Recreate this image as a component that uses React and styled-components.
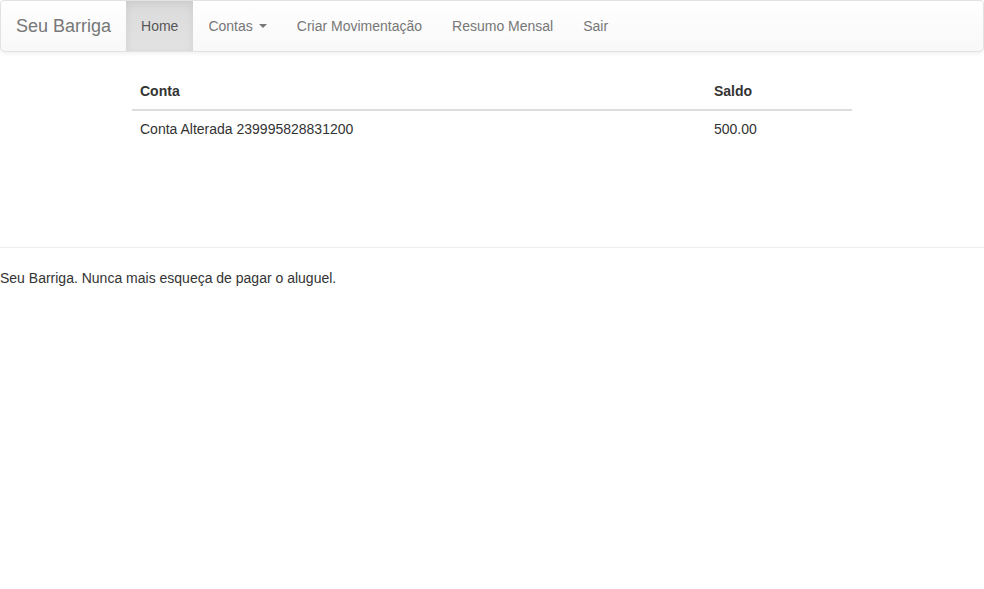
import React from "react";
import styled, { createGlobalStyle } from "styled-components";

const GlobalStyle = createGlobalStyle`
  * { box-sizing: border-box; }
  body {
    margin: 0;
    font-family: "Liberation Sans", Arial, Helvetica, sans-serif;
    font-size: 14px;
    line-height: 1.42857143;
    color: #333;
    background: #fff;
  }
`;

const Navbar = styled.nav`
  display: flex;
  align-items: stretch;
  height: 52px;
  border: 1px solid #e2e2e2;
  border-radius: 4px;
  background-image: linear-gradient(to bottom, #fff 0, #f8f8f8 100%);
  box-shadow: inset 0 1px 0 rgba(255,255,255,.15), 0 1px 5px rgba(0,0,0,.075);
  margin-bottom: 21px;
`;

const Brand = styled.a`
  padding: 15px;
  font-size: 18px;
  line-height: 20px;
  color: #777;
  text-decoration: none;
  text-shadow: 0 1px 0 rgba(255,255,255,.25);
`;

const NavList = styled.ul`
  display: flex;
  margin: 0;
  padding: 0;
  list-style: none;
`;

const NavItem = styled.li`
  display: flex;
`;

const NavLink = styled.a`
  display: flex;
  align-items: center;
  padding: 15px;
  line-height: 20px;
  color: ${p => (p.$active ? "#555" : "#777")};
  text-decoration: none;
  text-shadow: 0 1px 0 rgba(255,255,255,.25);
  background-image: ${p =>
    p.$active ? "linear-gradient(to bottom, #dbdbdb 0, #e2e2e2 100%)" : "none"};
  box-shadow: ${p => (p.$active ? "inset 0 3px 9px rgba(0,0,0,.075)" : "none")};
`;

const Caret = styled.span`
  display: inline-block;
  width: 0;
  height: 0;
  margin-left: 6px;
  border-top: 4px solid #777;
  border-right: 4px solid transparent;
  border-left: 4px solid transparent;
`;

const Container = styled.div`
  width: 750px;
  margin: 0 auto;
  padding: 0 15px;
`;

const Table = styled.table`
  width: 100%;
  border-collapse: collapse;
  margin-bottom: 20px;
`;

const Th = styled.th`
  text-align: left;
  padding: 8px;
  border-bottom: 2px solid #ddd;
  font-weight: bold;
  width: ${p => p.$width || "auto"};
`;

const Td = styled.td`
  padding: 8px;
`;

const Spacer = styled.div`
  height: 60px;
`;

const Rule = styled.hr`
  margin: 20px 0;
  border: 0;
  border-top: 1px solid #eee;
`;

const Footer = styled.footer`
  line-height: 20px;
`;

const accounts = [{ name: "Conta Alterada 239995828831200", saldo: "500.00" }];

export default function App() {
  return (
    <>
      <GlobalStyle />
      <Navbar>
        <Brand href="#">Seu Barriga</Brand>
        <NavList>
          <NavItem><NavLink $active href="#">Home</NavLink></NavItem>
          <NavItem><NavLink href="#">Contas<Caret /></NavLink></NavItem>
          <NavItem><NavLink href="#">Criar Movimentação</NavLink></NavItem>
          <NavItem><NavLink href="#">Resumo Mensal</NavLink></NavItem>
          <NavItem><NavLink href="#">Sair</NavLink></NavItem>
        </NavList>
      </Navbar>
      <Container>
        <Table>
          <thead>
            <tr>
              <Th $width="574px">Conta</Th>
              <Th>Saldo</Th>
            </tr>
          </thead>
          <tbody>
            {accounts.map(a => (
              <tr key={a.name}>
                <Td>{a.name}</Td>
                <Td>{a.saldo}</Td>
              </tr>
            ))}
          </tbody>
        </Table>
        <Spacer />
      </Container>
      <Rule />
      <Footer>Seu Barriga. Nunca mais esqueça de pagar o aluguel.</Footer>
    </>
  );
}
